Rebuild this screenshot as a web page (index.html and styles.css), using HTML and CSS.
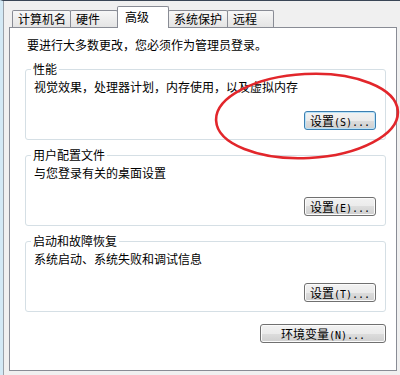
FILE: index.html
```html
<!DOCTYPE html>
<html lang="zh-CN">
<head>
<meta charset="utf-8">
<title>系统属性 - 高级</title>
<link rel="stylesheet" href="styles.css">
</head>
<body>
<div class="frame">
  <div class="tabs">
    <div class="tab t1">计算机名</div>
    <div class="tab t2">硬件</div>
    <div class="tab t3 selected">高级</div>
    <div class="tab t4">系统保护</div>
    <div class="tab t5">远程</div>
  </div>
  <div class="panel">
    <div class="intro">要进行大多数更改，您必须作为管理员登录。</div>
    <fieldset class="group first">
      <legend>性能</legend>
      <div class="desc">视觉效果，处理器计划，内存使用，以及虚拟内存</div>
      <div class="btn-row"><button class="btn default">设置<span class="asc">(S)...</span></button></div>
    </fieldset>
    <fieldset class="group">
      <legend>用户配置文件</legend>
      <div class="desc">与您登录有关的桌面设置</div>
      <div class="btn-row"><button class="btn">设置<span class="asc">(E)...</span></button></div>
    </fieldset>
    <fieldset class="group">
      <legend>启动和故障恢复</legend>
      <div class="desc">系统启动、系统失败和调试信息</div>
      <div class="btn-row"><button class="btn">设置<span class="asc">(T)...</span></button></div>
    </fieldset>
    <div class="env-row"><button class="btn env">环境变量<span class="asc">(N)...</span></button></div>
  </div>
</div>
<svg class="mark" width="420" height="200" viewBox="0 0 420 200" aria-hidden="true">
  <ellipse cx="307" cy="116" rx="91" ry="42" transform="rotate(-3 307 116)" fill="none" stroke="#e2262b" stroke-width="2.6"/>
</svg>
</body>
</html>
```
FILE: styles.css
```css
html, body {
  margin: 0;
  padding: 0;
}
body {
  width: 400px;
  height: 375px;
  overflow: hidden;
  background: #f0f0f0;
  font-family: "Noto Sans CJK SC", "Noto Sans", sans-serif;
  font-size: 12px;
  color: #000;
  position: relative;
}
.frame {
  box-sizing: border-box;
  height: 375px;
  border-top: 1px solid #3a4656;
  border-left: 3px solid #d3e9f5;
  box-shadow: inset 1px 0 0 #9aa2aa;
}
.tabs {
  display: flex;
  align-items: flex-end;
  height: 26px;
  margin-left: 9px;
}
.tab {
  box-sizing: border-box;
  height: 17px;
  border: 1px solid #898c95;
  border-bottom: none;
  border-radius: 2px 2px 0 0;
  background: linear-gradient(#f7f7f7, #e4e4e4);
  padding-left: 5px;
  line-height: 16px;
  white-space: nowrap;
  margin-left: -1px;
}
.t1 { width: 59px; margin-left: 0; }
.t2 { width: 48px; }
.t3 { width: 52px; }
.t4 { width: 60px; }
.t5 { width: 47px; }
.tab.selected {
  height: 22px;
  margin-bottom: -1px;
  background: #fff;
  padding-left: 7px;
  line-height: 20px;
  position: relative;
  z-index: 1;
}
.panel {
  box-sizing: border-box;
  width: 388px;
  height: 344px;
  margin-left: 6px;
  border: 1px solid #898c95;
  background: #fff;
  padding: 9px 10px 0 15px;
}
.intro {
  line-height: 16px;
  padding-left: 2px;
  white-space: nowrap;
}
.group {
  margin: 8px 0 0 0;
  padding: 3px 9px 9px 8px;
  border: 1px solid #d5dfe5;
  border-radius: 3px;
  min-inline-size: 0;
}
.group.first {
  margin-top: 9px;
}
.group legend {
  padding: 0 2px;
  margin-left: -3px;
  line-height: 14px;
}
.desc {
  line-height: 16px;
  white-space: nowrap;
}
.btn-row {
  display: flex;
  justify-content: flex-end;
  margin-top: 16px;
}
.btn {
  box-sizing: border-box;
  width: 72px;
  height: 19px;
  padding: 0;
  border: 1px solid #707070;
  border-radius: 3px;
  background: linear-gradient(#f2f2f2 0%, #ebebeb 50%, #dddddd 50%, #cfcfcf 100%);
  box-shadow: inset 0 0 0 1px #fbfbfb;
  font-family: "Noto Sans CJK SC", "Noto Sans", sans-serif;
  font-size: 12px;
  line-height: 17px;
  color: #000;
  white-space: nowrap;
}
.btn.default {
  border-color: #3c7fb1;
  box-shadow: inset 0 0 0 1px #b9e2f8;
}
.asc {
  font-family: "DejaVu Sans Mono", monospace;
  font-size: 10px;
}
.env-row {
  display: flex;
  justify-content: flex-end;
  margin-top: 12px;
}
.btn.env {
  width: 126px;
}
.mark {
  position: absolute;
  left: 0;
  top: 0;
  pointer-events: none;
}
```
